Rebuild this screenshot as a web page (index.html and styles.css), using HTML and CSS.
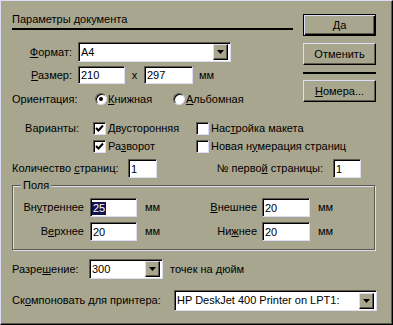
FILE: index.html
```html
<!DOCTYPE html>
<html lang="ru">
<head>
    <meta charset="UTF-8">
    <title>Параметры документа</title>
    <link rel="stylesheet" href="styles.css">
</head>
<body>
<div class="dialog">
    <div class="top">
        <div class="main">
            <div class="title">Параметры документа</div>

            <div class="row row-format">
                <span class="lbl lbl-main"><u>Ф</u>ормат:</span>
                <div class="combo combo-format">
                    <span class="combo-text">A4</span>
                    <span class="combo-btn"><svg width="7" height="4" viewBox="0 0 7 4"><polygon points="0,0 7,0 3.5,4"/></svg></span>
                </div>
            </div>

            <div class="row row-size">
                <span class="lbl lbl-main"><u>Р</u>азмер:</span>
                <div class="field size-w">210</div>
                <span class="times">x</span>
                <div class="field size-h">297</div>
                <span class="unit">мм</span>
            </div>

            <div class="row row-orient">
                <span class="lbl-orient">Ориентация:</span>
                <span class="option option-first"><span class="radio checked"></span><u>К</u>нижная</span>
                <span class="option"><span class="radio"></span><u>А</u>льбомная</span>
            </div>
        </div>

        <div class="buttons">
            <button class="btn btn-default">Да</button>
            <button class="btn">Отменить</button>
            <div class="btn-sep"></div>
            <button class="btn"><u>Н</u>омера...</button>
        </div>
    </div>

    <div class="variants">
        <span class="lbl lbl-var">Варианты:</span>
        <span class="check-item"><span class="check checked"><svg width="9" height="9" viewBox="0 0 9 9"><path d="M1 4 L3.5 6.5 L8 1.5" /></svg></span><u>Д</u>вусторонняя</span>
        <span class="check-item"><span class="check"></span>Нас<u>т</u>ройка макета</span>
        <span></span>
        <span class="check-item"><span class="check checked"><svg width="9" height="9" viewBox="0 0 9 9"><path d="M1 4 L3.5 6.5 L8 1.5" /></svg></span>Ра<u>з</u>ворот</span>
        <span class="check-item"><span class="check"></span>Новая н<u>у</u>мерация страниц</span>
    </div>

    <div class="row row-count">
        <span class="lbl-count">Количество <u>с</u>траниц:</span>
        <div class="field count-w">1</div>
        <span class="lbl-first">№ перво<u>й</u> страницы:</span>
        <div class="field first-w">1</div>
    </div>

    <fieldset class="group">
        <legend>Поля</legend>
        <div class="row margin-row">
            <span class="lbl-m">Вн<u>у</u>треннее</span>
            <div class="field m-w"><span class="selected">25</span></div>
            <span class="unit-m">мм</span>
            <span class="lbl-m2"><u>В</u>нешнее</span>
            <div class="field m-w2">20</div>
            <span class="unit-m2">мм</span>
        </div>
        <div class="row margin-row">
            <span class="lbl-m">В<u>е</u>рхнее</span>
            <div class="field m-w">20</div>
            <span class="unit-m">мм</span>
            <span class="lbl-m2">Ни<u>ж</u>нее</span>
            <div class="field m-w2">20</div>
            <span class="unit-m2">мм</span>
        </div>
    </fieldset>

    <div class="row row-res">
        <span class="lbl-res">Разре<u>ш</u>ение:</span>
        <div class="combo combo-res">
            <span class="combo-text">300</span>
            <span class="combo-btn"><svg width="7" height="4" viewBox="0 0 7 4"><polygon points="0,0 7,0 3.5,4"/></svg></span>
        </div>
        <span class="res-unit">точек на дюйм</span>
    </div>

    <div class="row row-printer">
        <span class="lbl-printer">Ск<u>о</u>мпоновать для принтера:</span>
        <div class="combo combo-printer">
            <span class="combo-text">HP DeskJet 400 Printer on LPT1:</span>
            <span class="combo-btn"><svg width="7" height="4" viewBox="0 0 7 4"><polygon points="0,0 7,0 3.5,4"/></svg></span>
        </div>
    </div>
</div>
</body>
</html>
```

FILE: styles.css
```css
* {
    margin: 0;
    padding: 0;
    box-sizing: border-box;
}

body {
    font-family: "Liberation Sans", Arial, sans-serif;
    font-size: 11px;
    line-height: 13px;
    color: #000;
    background: #a8a68e;
}

u {
    text-decoration: underline;
    text-underline-offset: 1px;
}

.dialog {
    width: 393px;
    height: 325px;
    background: #a8a68e;
    border: 1px solid;
    border-color: #dcdcf4 #000 #000 #dcdcf4;
    box-shadow: inset -1px -1px 0 #5c5a4c;
    padding: 11px 15px 0 11px;
}

.top {
    display: flex;
    justify-content: space-between;
}

.main {
    width: 281px;
}

.title {
    height: 18px;
    padding-top: 1px;
    border-bottom: 2px solid #000;
}

.row {
    display: flex;
    align-items: center;
}

.lbl {
    text-align: right;
}

.lbl-main {
    width: 60px;
    margin-right: 6px;
}

/* поля ввода */
.field {
    background: #fff;
    height: 18px;
    border: 1px solid;
    border-color: #5c5a4c #dcdcf4 #dcdcf4 #5c5a4c;
    box-shadow: inset 1px 1px 0 #000;
    padding: 1px 0 0 2px;
    display: flex;
    align-items: center;
}

.combo {
    position: relative;
    background: #fff;
    height: 20px;
    border: 1px solid;
    border-color: #5c5a4c #dcdcf4 #dcdcf4 #5c5a4c;
    box-shadow: inset 1px 1px 0 #000;
    display: flex;
    align-items: center;
    padding: 1px 2px 1px 2px;
}

.combo-text {
    flex: 1;
    white-space: nowrap;
    overflow: hidden;
}

.combo-btn {
    width: 15px;
    height: 16px;
    margin-top: 0;
    background: #a8a68e;
    border: 1px solid;
    border-color: #dcdcf4 #000 #000 #dcdcf4;
    box-shadow: inset -1px -1px 0 #5c5a4c;
    display: flex;
    align-items: center;
    justify-content: center;
}

.combo-btn svg {
    fill: #000;
}

.row-format {
    margin-top: 12px;
}

.combo-format {
    width: 153px;
}

.row-size {
    margin-top: 4px;
}

.size-w {
    width: 47px;
}

.times {
    width: 19px;
    text-align: center;
}

.size-h {
    width: 49px;
}

.unit {
    margin-left: 6px;
}

.row-orient {
    margin-top: 8px;
    height: 14px;
}

.lbl-orient {
    width: 83px;
}

.option {
    display: flex;
    align-items: center;
}

.option-first {
    width: 78px;
}

.radio {
    width: 12px;
    height: 12px;
    margin-right: 1px;
    border-radius: 50%;
    background: #fff;
    border: 1px solid;
    border-color: #5c5a4c #dcdcf4 #dcdcf4 #5c5a4c;
    box-shadow: inset 1px 1px 0 #000;
    display: flex;
    align-items: center;
    justify-content: center;
}

.radio.checked::after {
    content: "";
    width: 4px;
    height: 4px;
    border-radius: 50%;
    background: #000;
}

/* кнопки справа */
.buttons {
    width: 73px;
    margin-right: 1px;
    padding-top: 2px;
    display: flex;
    flex-direction: column;
}

.btn {
    font: inherit;
    color: #000;
    height: 22px;
    background: #a8a68e;
    border: 1px solid;
    border-color: #dcdcf4 #000 #000 #dcdcf4;
    box-shadow: inset -1px -1px 0 #5c5a4c;
    margin-bottom: 7px;
}

.btn-default {
    border: 1px solid #000;
    box-shadow: inset 1px 1px 0 #dcdcf4, inset -1px -1px 0 #000, inset -2px -2px 0 #5c5a4c;
}

.btn-sep {
    height: 2px;
    background: #000;
    margin-bottom: 6px;
}

/* варианты */
.variants {
    margin-top: 10px;
    display: grid;
    grid-template-columns: 81px 103px auto;
    grid-auto-rows: 18px;
    align-items: center;
}

.lbl-var {
    padding-right: 14px;
}

.check-item {
    display: flex;
    align-items: center;
}

.check {
    width: 13px;
    height: 13px;
    margin-right: 2px;
    background: #fff;
    border: 1px solid;
    border-color: #5c5a4c #dcdcf4 #dcdcf4 #5c5a4c;
    box-shadow: inset 1px 1px 0 #000;
    display: flex;
    align-items: center;
    justify-content: center;
}

.check svg {
    fill: none;
    stroke: #000;
    stroke-width: 2;
}

.row-count {
    margin-top: 4px;
}

.row-count .field {
    height: 19px;
}

.lbl-count {
    width: 116px;
}

.count-w {
    width: 29px;
}

.lbl-first {
    width: 176px;
    text-align: right;
    padding-right: 10px;
}

.first-w {
    width: 28px;
}

/* группа Поля */
.group {
    margin: 1px 2px 0 0;
    border: 1px solid #5c5a4c;
    box-shadow: inset 1px 1px 0 #dcdcf4, 1px 1px 0 #dcdcf4;
    padding: 0 0 8px 0;
}

.group legend {
    margin-left: 8px;
    padding: 0 2px;
    background: #a8a68e;
}

.margin-row {
    margin-top: 5px;
}

.margin-row:first-of-type {
    margin-top: 6px;
}

.margin-row .field {
    height: 19px;
}

.lbl-m {
    width: 71px;
    text-align: right;
    margin-right: 6px;
}

.m-w {
    width: 47px;
}

.unit-m {
    width: 40px;
    margin-left: 8px;
}

.lbl-m2 {
    width: 72px;
    text-align: right;
    margin-right: 5px;
}

.m-w2 {
    width: 48px;
}

.unit-m2 {
    margin-left: 8px;
}

.selected {
    background: #141450;
    color: #fff;
    padding: 0 1px;
    margin-left: -1px;
}

.row-res {
    margin-top: 9px;
}

.lbl-res {
    width: 77px;
}

.combo-res {
    width: 74px;
}

.res-unit {
    margin-left: 7px;
}

.row-printer {
    margin-top: 11px;
}

.lbl-printer {
    width: 162px;
}

.combo-printer {
    width: 203px;
    height: 21px;
}
```
